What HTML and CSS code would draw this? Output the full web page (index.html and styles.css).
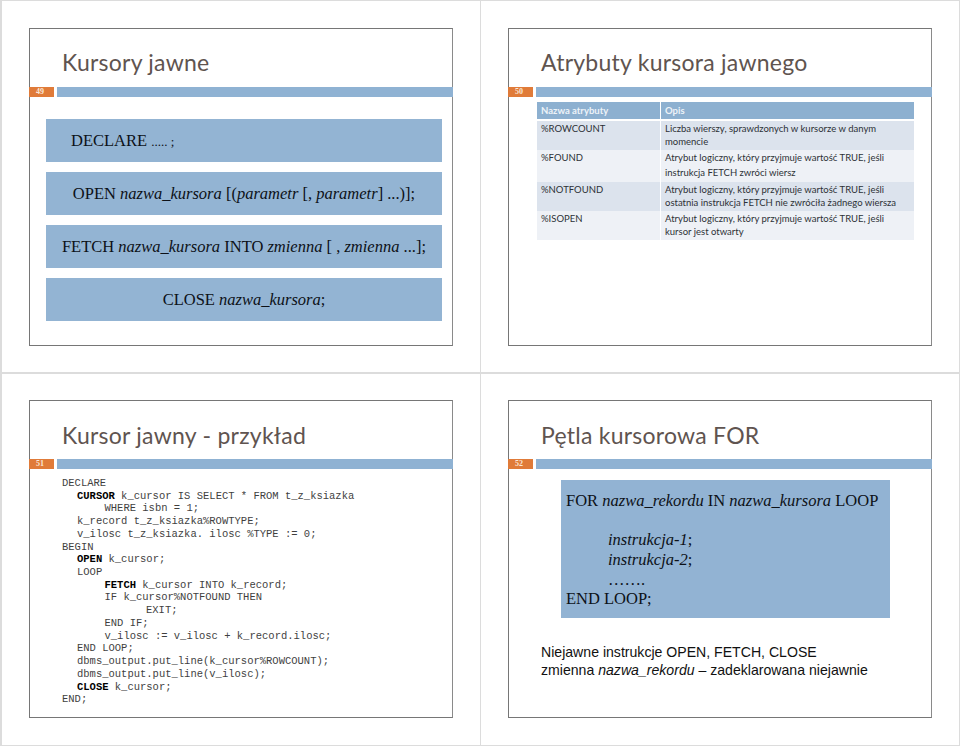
FILE: index.html
```html
<!DOCTYPE html>
<html lang="pl">
<head>
<meta charset="utf-8">
<title>Kursory jawne</title>
<link rel="stylesheet" href="styles.css">
</head>
<body>
<main class="sheet">
  <section class="page page-left page-top">
    <div class="slide">
      <h1 class="title">Kursory jawne</h1>
      <div class="rule"><span class="num">49</span><span class="bar"></span></div>
      <div class="stack">
        <p class="block block-first">DECLARE <span class="dots">..... ;</span></p>
        <p class="block">OPEN <i>nazwa_kursora</i> [(<i>parametr</i> [, <i>parametr</i>] ...)];</p>
        <p class="block">FETCH <i>nazwa_kursora</i> INTO <i>zmienna</i> [ , <i>zmienna</i> ...];</p>
        <p class="block">CLOSE <i>nazwa_kursora</i>;</p>
      </div>
    </div>
  </section>
  <section class="page page-right page-top">
    <div class="slide">
      <h1 class="title">Atrybuty kursora jawnego</h1>
      <div class="rule"><span class="num">50</span><span class="bar"></span></div>
      <table class="attrs">
        <thead>
          <tr class="row-head"><th class="col-name">Nazwa atrybuty</th><th>Opis</th></tr>
        </thead>
        <tbody>
          <tr class="row-a"><td>%ROWCOUNT</td><td>Liczba wierszy, sprawdzonych w kursorze w danym<br>momencie</td></tr>
          <tr class="row-b row-tall"><td>%FOUND</td><td>Atrybut logiczny, który przyjmuje wartość TRUE, jeśli<br>instrukcja FETCH zwróci wiersz</td></tr>
          <tr class="row-a"><td>%NOTFOUND</td><td>Atrybut logiczny, który przyjmuje wartość TRUE, jeśli<br>ostatnia instrukcja FETCH nie zwróciła żadnego wiersza</td></tr>
          <tr class="row-b"><td>%ISOPEN</td><td>Atrybut logiczny, który przyjmuje wartość TRUE, jeśli<br>kursor jest otwarty</td></tr>
        </tbody>
      </table>
    </div>
  </section>
  <section class="page page-left page-bottom">
    <div class="slide">
      <h1 class="title">Kursor jawny - przykład</h1>
      <div class="rule"><span class="num">51</span><span class="bar"></span></div>
      <div class="code">
        <div class="ln">DECLARE</div>
        <div class="ln i1"><b>CURSOR</b> k_cursor IS SELECT * FROM t_z_ksiazka</div>
        <div class="ln i2">WHERE isbn = 1;</div>
        <div class="ln i1">k_record t_z_ksiazka%ROWTYPE;</div>
        <div class="ln i1">v_ilosc t_z_ksiazka. ilosc %TYPE := 0;</div>
        <div class="ln">BEGIN</div>
        <div class="ln i1"><b>OPEN</b> k_cursor;</div>
        <div class="ln i1">LOOP</div>
        <div class="ln i2"><b>FETCH</b> k_cursor INTO k_record;</div>
        <div class="ln i2">IF k_cursor%NOTFOUND THEN</div>
        <div class="ln i3">EXIT;</div>
        <div class="ln i2">END IF;</div>
        <div class="ln i2">v_ilosc := v_ilosc + k_record.ilosc;</div>
        <div class="ln i1">END LOOP;</div>
        <div class="ln i1">dbms_output.put_line(k_cursor%ROWCOUNT);</div>
        <div class="ln i1">dbms_output.put_line(v_ilosc);</div>
        <div class="ln i1"><b>CLOSE</b> k_cursor;</div>
        <div class="ln">END;</div>
      </div>
    </div>
  </section>
  <section class="page page-right page-bottom">
    <div class="slide">
      <h1 class="title">Pętla kursorowa FOR</h1>
      <div class="rule"><span class="num">52</span><span class="bar"></span></div>
      <div class="loop">
        <p class="loop-line loop-gap">FOR <i>nazwa_rekordu</i> IN <i>nazwa_kursora</i> LOOP</p>
        <p class="loop-line loop-in"><i>instrukcja-1</i>;</p>
        <p class="loop-line loop-in"><i>instrukcja-2</i>;</p>
        <p class="loop-line loop-in">…….</p>
        <p class="loop-line">END LOOP;</p>
      </div>
      <p class="note">Niejawne instrukcje OPEN, FETCH, CLOSE<br>zmienna <i>nazwa_rekordu</i> – zadeklarowana niejawnie</p>
    </div>
  </section>
</main>
</body>
</html>
```
FILE: styles.css
```css
html, body { margin: 0; padding: 0; background: #fff; }
body { width: 960px; height: 746px; overflow: hidden; }
.sheet {
  display: grid;
  grid-template-columns: 480px 480px;
  grid-template-rows: 373px 373px;
}
.page { box-sizing: border-box; border: 0 solid #dcdcdc; }
.page-top { border-top-width: 1px; padding-top: 27px; }
.page-bottom { border-top-width: 1px; padding-top: 26px; }
.page-left { border-left-width: 2px; padding-left: 27px; }
.page-right { border-left-width: 1px; border-right-width: 1px; padding-left: 27px; }
.page-top, .page-bottom { border-bottom-width: 1px; }
.slide {
  box-sizing: border-box;
  width: 424px;
  height: 318px;
  border: 1px solid #767676;
  border-right-color: #8a8a8a;
  background: #fff;
}
.title {
  margin: 0;
  height: 58px;
  box-sizing: border-box;
  padding: 17px 0 0 32px;
  font: 400 23px/32px Lato, "Open Sans", sans-serif;
  letter-spacing: 0.25px;
  color: #5f5450;
}
.page-bottom .title { padding-top: 18px; }
.rule { display: flex; gap: 3px; height: 10px; margin: 0 -1px; }
.num {
  width: 25px;
  background: #e07b39;
  color: #fbe6d6;
  font: 700 8px/9px "Liberation Serif", serif;
  text-align: center;
  padding-right: 3px;
  box-sizing: border-box;
}
.bar { flex: 1; background: #8fb2d3; }

.stack { display: flex; flex-direction: column; gap: 10.5px; padding: 22px 10px 0 16px; }
.block {
  margin: 0;
  height: 42.5px;
  background: #93b4d3;
  color: #0d1117;
  font: 400 16.5px/43.5px "Liberation Serif", serif;
  text-align: center;
}
.block-first { text-align: left; padding-left: 25px; }
.dots { font-size: 13px; }

.attrs {
  border-collapse: separate;
  border-spacing: 0;
  table-layout: fixed;
  width: 377px;
  margin: 5px 0 0 28px;
  font: 400 9.5px/13px Lato, "Open Sans", sans-serif;
  color: #2d3136;
}
.attrs th, .attrs td { box-sizing: border-box; padding: 0 0 0 4px; vertical-align: top; text-align: left; }
.attrs th + th, .attrs td + td { border-left: 1px solid #fff; padding-left: 4px; }
.col-name { width: 123px; }
.row-head th {
  height: 18px;
  background: #8db0d0;
  color: #eef3f8;
  font-weight: 700;
  line-height: 17px;
  border-bottom: 2px solid #fff;
}
.row-a td, .row-b td { height: 29px; padding-top: 1px; }
.row-a td { background: #dce3ed; }
.row-b td { background: #eef1f6; }
.row-tall td { height: 32px; padding-top: 0; line-height: 15px; }

.code {
  padding: 8px 0 0 32px;
  font: 400 10.5px/12.72px "Liberation Mono", monospace;
  color: #3f3f3f;
}
.ln { white-space: pre; }
.i1 { padding-left: 15px; }
.i2 { padding-left: 42.5px; }
.i3 { padding-left: 84px; }
.code b { color: #000; }

.loop {
  box-sizing: border-box;
  width: 329px;
  height: 138px;
  margin: 11px 0 0 52px;
  padding: 10.5px 0 0 5px;
  background: #92b3d3;
  color: #0d1117;
  font: 400 16.5px/19.8px "Liberation Serif", serif;
}
.loop-line { margin: 0; }
.loop-gap { margin-bottom: 19.8px; }
.loop-in { padding-left: 42px; }
.note {
  margin: 26px 0 0 32px;
  font: 400 14.1px/17.5px "Liberation Sans", Arial, sans-serif;
  color: #111;
}
```
